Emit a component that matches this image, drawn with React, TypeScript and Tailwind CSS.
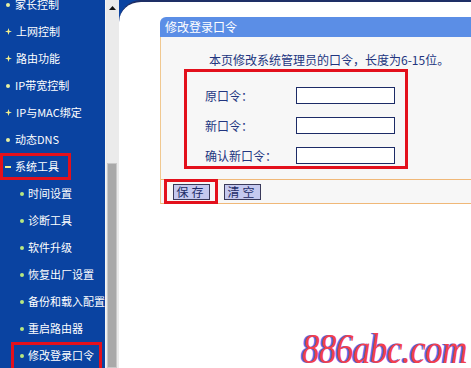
import React from 'react';

type Item = { label: string; kind: 'plus' | 'dot' | 'minus' | 'sub'; mark?: string };

const items: Item[] = [
  { label: '家长控制', kind: 'dot' },
  { label: '上网控制', kind: 'plus' },
  { label: '路由功能', kind: 'plus' },
  { label: 'IP带宽控制', kind: 'dot' },
  { label: 'IP与MAC绑定', kind: 'plus' },
  { label: '动态DNS', kind: 'dot' },
  { label: '系统工具', kind: 'minus', mark: 'top' },
  { label: '时间设置', kind: 'sub' },
  { label: '诊断工具', kind: 'sub' },
  { label: '软件升级', kind: 'sub' },
  { label: '恢复出厂设置', kind: 'sub' },
  { label: '备份和载入配置', kind: 'sub' },
  { label: '重启路由器', kind: 'sub' },
  { label: '修改登录口令', kind: 'sub', mark: 'sub' },
];

function Bullet({ kind }: { kind: Item['kind'] }) {
  if (kind === 'plus') {
    return (
      <svg width="7" height="7" viewBox="0 0 7 7" className="mr-[4px] shrink-0">
        <path d="M3.5 0 L4.3 2.7 L7 3.5 L4.3 4.3 L3.5 7 L2.7 4.3 L0 3.5 L2.7 2.7 Z" fill="#f4f08a" />
      </svg>
    );
  }
  if (kind === 'minus') {
    return <span className="mr-[4px] h-[2px] w-[6px] shrink-0 bg-[#f4f08a]" />;
  }
  if (kind === 'dot') {
    return <span className="mr-[5px] ml-[1px] h-[4px] w-[4px] shrink-0 rounded-full bg-[#e8f0a0]" />;
  }
  return <span className="mr-[4px] h-[4px] w-[4px] shrink-0 rounded-full bg-[#b8e880]" />;
}

function Sidebar() {
  return (
    <div className="h-full w-[105px] shrink-0 overflow-hidden bg-[#0a43a1]">
      <div className="mt-[-9px] flex flex-col">
        {items.map((it) => (
          <div
            key={it.label}
            className={`relative flex h-[27px] items-center whitespace-nowrap text-[11px] text-white ${
              it.kind === 'sub' ? 'pl-[20px]' : 'pl-[5px]'
            }`}
          >
            <Bullet kind={it.kind} />
            <span>{it.label}</span>
            {it.mark === 'top' && (
              <span className="absolute left-0 top-0 h-[27px] w-[71px] border-[3px] border-[#e3101c]" />
            )}
            {it.mark === 'sub' && (
              <span className="absolute left-[11px] top-0 h-[30px] w-[91px] border-[3px] border-[#e3101c]" />
            )}
          </div>
        ))}
      </div>
    </div>
  );
}

function Scrollbar() {
  return (
    <div className="flex h-full w-[14px] shrink-0 flex-col border-l border-[#f4f4f4] bg-[#ebebeb]">
      <div className="flex h-[16px] items-center justify-center">
        <svg width="7" height="4" viewBox="0 0 7 4">
          <path d="M0 4 L3.5 0 L7 4 Z" fill="#111" />
        </svg>
      </div>
      <div className="mt-[147px] ml-[1px] mr-[2px] flex-1 border border-[#c8c8c8] bg-[#a9a9a9]" />
    </div>
  );
}

function Field({ label }: { label: string }) {
  return (
    <div className="flex h-[17px] items-center">
      <span className="w-[91px] text-[12px] text-[#22357f]">{label}</span>
      <div className="h-[17px] w-[99px] border border-[#1c2b66] bg-white" />
    </div>
  );
}

function Btn({ text }: { text: string }) {
  return (
    <button className="flex h-[16px] w-[37px] items-center justify-center border border-[#3a3a5a] bg-[#c5c9ef] text-[12px] tracking-[3px] text-[#1c2b66]">
      {text}
    </button>
  );
}

function Panel() {
  return (
    <div className="ml-[41px] mt-[15px] flex flex-col">
      <div className="flex h-[20px] items-center rounded-tl-[6px] bg-[#5b8ee6] pl-[5px] text-[12px] text-white">
        修改登录口令
      </div>
      <div className="flex flex-col border-l border-[#f0c890] bg-[#f7f7f7]">
        <div className="mt-[15px] flex h-[16px] items-center pl-[48px] text-[12px] text-[#22357f]">
          本页修改系统管理员的口令，长度为6-15位。
        </div>
        <div className="ml-[23px] mt-[1px] flex h-[100px] w-[224px] flex-col gap-[13px] border-[3px] border-[#e3101c] pl-[18px] pt-[15px]">
          <Field label="原口令：" />
          <Field label="新口令：" />
          <Field label="确认新口令：" />
        </div>
        <div className="mt-[10px] flex h-[25px] items-center gap-[14px] border-y border-[#f0b878] pl-[12px]">
          <div className="relative">
            <Btn text="保存" />
            <span className="absolute left-[-9px] top-[-5px] h-[25px] w-[54px] border-[3px] border-[#e3101c]" />
          </div>
          <Btn text="清空" />
        </div>
      </div>
    </div>
  );
}

export default function App() {
  return (
    <div
      className="relative flex h-[368px] w-[471px] overflow-hidden bg-white"
      style={{ fontFamily: '"Noto Sans CJK SC", "Liberation Sans", sans-serif' }}
    >
      <Sidebar />
      <Scrollbar />
      <div className="h-full flex-1 bg-[#0a43a1]">
        <div className="h-full rounded-tl-[22px] border-t-2 border-[#1e2f66] bg-white">
          <Panel />
        </div>
      </div>
      <span
        className="absolute bottom-[-2px] left-[302px] origin-bottom scale-y-[1.2] text-[35px] italic leading-none tracking-[-0.5px] text-[#f2404e] [text-shadow:-2px_0_0_#5a6cf0]"
        style={{ fontFamily: '"Liberation Serif", serif' }}
      >
        886abc.com
      </span>
    </div>
  );
}
